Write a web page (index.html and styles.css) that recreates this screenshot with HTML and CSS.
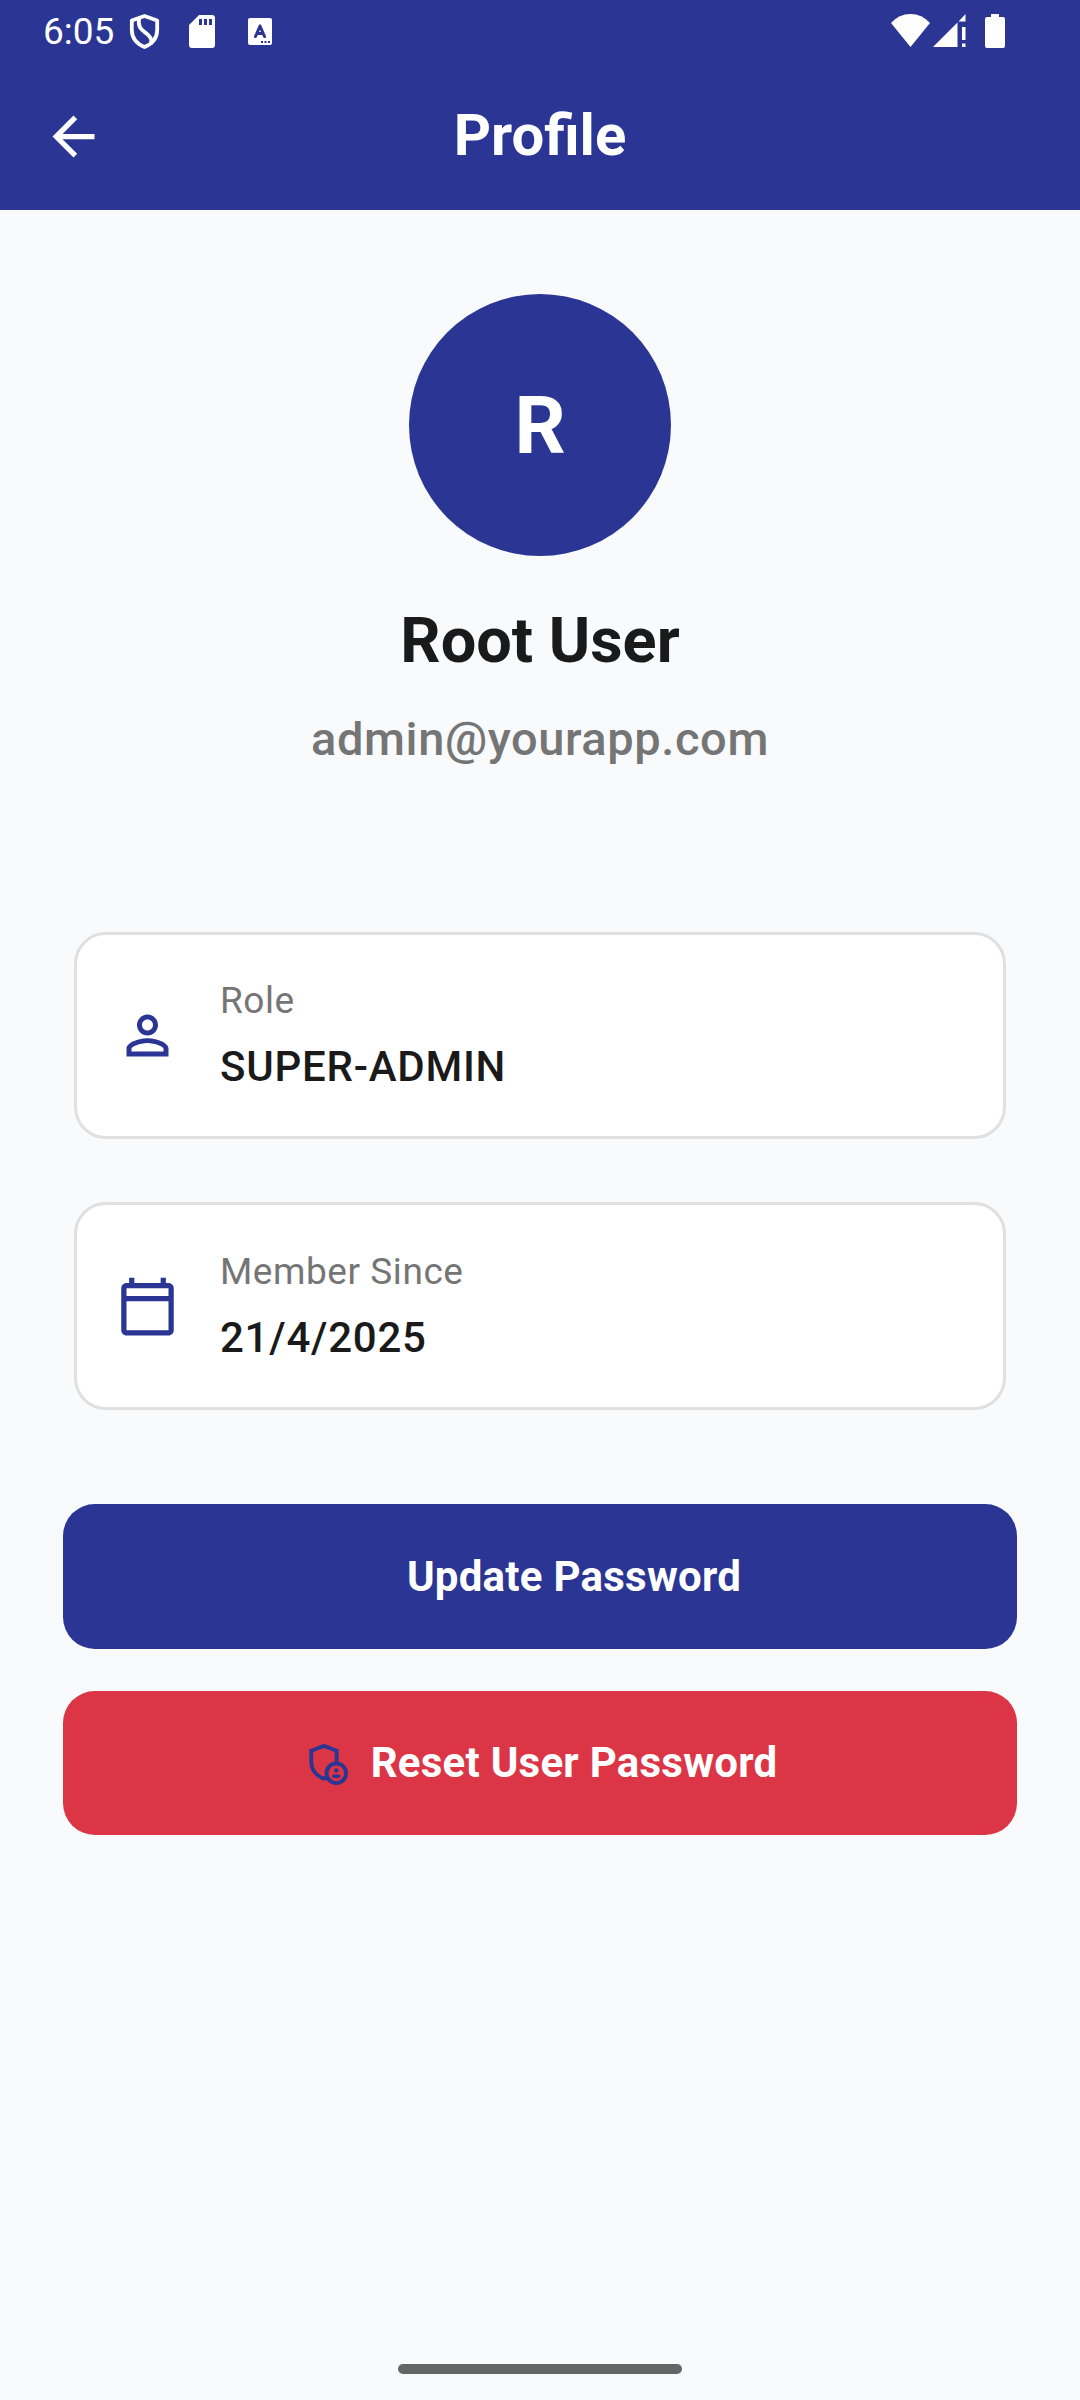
FILE: index.html
```html
<!DOCTYPE html>
<html lang="en">
<head>
<meta charset="utf-8">
<title>Profile</title>
<link rel="stylesheet" href="styles.css">
</head>
<body>
<div class="screen">
  <div class="status-bar">
    <span class="clock">6:05</span>
    <svg class="status-shield" width="32" height="36" viewBox="0 0 32 36" fill="none" stroke="#fff" stroke-width="3.8" stroke-linejoin="round"><path d="M16.500 2 L29.200 6.500 V15.500 C29.200 24 24 30 16.500 33 C9 30 3.800 24 3.800 15.500 V6.500 Z"/><path d="M11 4.500 C9.500 14 14.500 16.500 18.500 19.500 C23 23 24.500 26 23 30"/></svg>
    <svg class="status-card" width="26" height="34" viewBox="0 0 26 34"><path fill="#fff" fill-rule="evenodd" d="M10 1H23Q26 1 26 4V31Q26 34 23 34H3Q0 34 0 31V11ZM10 5V11H13V5ZM15 5V11H18V5ZM20 5V11H23V5Z"/></svg>
    <svg class="status-keyboard" width="24" height="27" viewBox="0 0 24 27"><rect width="24" height="27" rx="2" fill="#fff"/><path d="M7.500 18.500 L12 8 L16.500 18.500 M9 15.500H15" fill="none" stroke="#2a3594" stroke-width="3" stroke-linecap="round" stroke-linejoin="round"/><path d="M13 23h2v2h-2zM16.500 23h2v2h-2zM20 23h2v2h-2z" fill="#2a3594"/></svg>
    <svg class="status-wifi" width="39" height="33" viewBox="0 0 39 33"><path fill="#fff" d="M0 9Q8 0 19.500 0T39 9L19.500 33Z"/></svg>
    <svg class="status-signal" width="33" height="33" viewBox="0 0 33 33"><path fill="#fff" d="M0 33L24.500 8.500V33ZM25.500 7.500L32.500 0V7.500ZM29 13h3.500v13h-3.500zM29 29.500h3.500v3.500h-3.500z"/></svg>
    <svg class="status-battery" width="20" height="34" viewBox="0 0 20 34"><path fill="#fff" d="M6 0H14V3H18Q20 3 20 5V32Q20 34 18 34H2Q0 34 0 32V5Q0 3 2 3H6Z"/></svg>
  </div>
  <header class="app-bar">
    <svg class="back" width="63" height="63" viewBox="0 0 24 24"><path fill="#fff" d="M20 11H7.830l5.590-5.590L12 4l-8 8 8 8 1.410-1.410L7.830 13H20v-2z"/></svg>
    <h1 class="title">Profile</h1>
  </header>
  <main class="content">
    <div class="avatar">R</div>
    <h2 class="name">Root User</h2>
    <p class="email">admin@yourapp.com</p>
    <section class="cards">
      <div class="card">
        <svg class="card-icon" width="63" height="63" viewBox="0 0 24 24"><path fill="#2a3594" d="M12 5.900c1.160 0 2.100.94 2.100 2.100s-.94 2.100-2.100 2.100S9.900 9.160 9.900 8s.94-2.100 2.100-2.100m0 9c2.970 0 6.100 1.460 6.100 2.100v1.100H5.900V17c0-.64 3.130-2.100 6.100-2.100M12 4C9.790 4 8 5.790 8 8s1.790 4 4 4 4-1.790 4-4-1.790-4-4-4zm0 9c-2.670 0-8 1.340-8 4v3h16v-3c0-2.660-5.330-4-8-4z"/></svg>
        <div class="card-text"><span class="label">Role</span><span class="value">SUPER-ADMIN</span></div>
      </div>
      <div class="card">
        <svg class="card-icon" width="63" height="63" viewBox="0 0 24 24"><path fill="#2a3594" d="M20 3h-1V1h-2v2H7V1H5v2H4c-1.100 0-2 .9-2 2v16c0 1.100.9 2 2 2h16c1.100 0 2-.9 2-2V5c0-1.100-.9-2-2-2zm0 18H4V10h16v11zm0-13H4V5h16v3z"/></svg>
        <div class="card-text"><span class="label">Member Since</span><span class="value">21/4/2025</span></div>
      </div>
    </section>
    <div class="actions">
      <button class="button primary"><span class="icon-slot"></span><span>Update Password</span></button>
      <button class="button danger"><svg class="icon-slot" width="47" height="47" viewBox="0 0 24 24"><g fill="none" stroke="#2a3594" stroke-width="2"><path d="M17.200 11.500V5.500L10.700 3 4.200 5.500V11C4.200 15.200 6.900 18.600 10.700 19.700L12.600 19.100"/><circle cx="17" cy="17" r="5"/></g><circle cx="17" cy="15.500" r="1.120" fill="#2a3594"/><ellipse cx="17" cy="18.500" rx="2.100" ry="1" fill="#2a3594"/></svg><span>Reset User Password</span></button>
    </div>
  </main>
  <div class="home-indicator"></div>
</div>
</body>
</html>
```
FILE: styles.css
```css
* { box-sizing: border-box; margin: 0; padding: 0; }
body { background: #f8fafc; font-family: Roboto, sans-serif; color: #1a1a1a; }
.screen { width: 1080px; height: 2400px; display: flex; flex-direction: column; align-items: center; }
svg { display: block; flex: none; }
.status-bar { width: 100%; height: 63px; flex: none; background: #2a3594; display: flex; align-items: flex-start; padding: 14px 75px 0 43px; }
.clock { font-size: 37px; line-height: 35px; width: 85px; flex: none; color: #fff; white-space: nowrap; }
.status-card { margin-left: 29px; }
.status-keyboard { margin: 4px 0 0 33px; }
.status-wifi { margin-left: auto; }
.status-signal { margin-left: 3px; }
.status-battery { margin-left: 19px; }
.app-bar { width: 100%; height: 147px; flex: none; background: #2a3594; display: grid; grid-template-columns: 63px 1fr 63px; align-items: center; padding: 0 42px; }
.title { color: #fff; text-align: center; font-size: 58px; line-height: 70px; font-weight: 700; padding-bottom: 4px; }
.content { width: 100%; flex: 1; display: flex; flex-direction: column; align-items: center; padding: 84px 63px 0; }
.avatar { width: 262px; height: 262px; border-radius: 50%; background: #2a3594; color: #fff; display: flex; align-items: center; justify-content: center; padding-top: 2px; font-size: 80px; font-weight: 700; }
.name { margin-top: 43px; font-size: 63px; line-height: 84px; font-weight: 700; }
.email { margin-top: 26px; font-size: 47px; line-height: 60px; letter-spacing: .6px; font-weight: 500; color: #757575; }
.cards { width: 932px; margin-top: 163px; display: flex; flex-direction: column; gap: 63px; }
.card { height: 207px; border: 3px solid #e0e0e0; border-radius: 32px; background: #fff; display: flex; align-items: center; padding-left: 39px; gap: 41px; }
.card + .card { height: 208px; }
.card-text { display: flex; flex-direction: column; gap: 8px; padding-top: 1px; }
.label { font-size: 37px; line-height: 53px; letter-spacing: .55px; color: #757575; }
.value { font-size: 42px; line-height: 63px; letter-spacing: .75px; font-weight: 500; }
.actions { width: 954px; margin-top: 94px; display: flex; flex-direction: column; gap: 42px; }
.button { height: 144px; border: 0; border-radius: 32px; color: #fff; font: 700 42px/60px Roboto, sans-serif; letter-spacing: .25px; display: flex; align-items: center; justify-content: center; gap: 21px; }
.primary { height: 145px; background: #2a3594; }
.danger { background: #dc3545; }
.icon-slot { width: 47px; height: 47px; }
.home-indicator { width: 284px; height: 10px; flex: none; margin-bottom: 26px; border-radius: 5px; background: #646665; }
```
